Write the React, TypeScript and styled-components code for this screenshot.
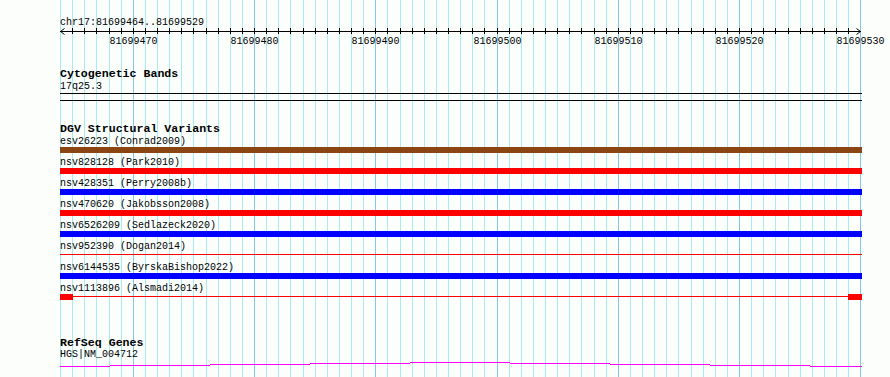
import React from "react";
import styled, { createGlobalStyle } from "styled-components";

const GlobalStyle = createGlobalStyle`
  html, body {
    margin: 0;
    padding: 0;
    background: #fcfefc;
  }
  body {
    font-family: "Liberation Mono", "DejaVu Sans Mono", monospace;
    color: #000;
  }
`;

const START = 81699464;
const END = 81699529;
const BASES = END - START + 1; // 66
const LEFT = 60;
const PX_PER_BASE = 12.125;
const TRACK_WIDTH = 802;

const gx = (k: number) => Math.round(LEFT + k * PX_PER_BASE) + 0.5;
const rx = (k: number) => Math.round(k * PX_PER_BASE) + 0.5;

const Page = styled.div`
  position: relative;
  width: 890px;
  height: 377px;
  overflow: hidden;
  background: #fcfefc;
`;

const Guides = styled.svg`
  position: absolute;
  left: 0;
  top: 0;
  display: block;
`;

const Content = styled.div`
  position: relative;
  padding-left: ${LEFT}px;
  width: ${TRACK_WIDTH}px;
`;

const PositionLabel = styled.div`
  padding-top: 17px;
  font-size: 10px;
  line-height: 11px;
  white-space: pre;
`;

const RulerSvg = styled.svg`
  display: block;
  overflow: visible;
  font-family: "Liberation Mono", "DejaVu Sans Mono", monospace;
  font-size: 10px;
`;

const Section = styled.section<{ $gap: number }>`
  display: flex;
  flex-direction: column;
  padding-top: ${(p) => p.$gap}px;
`;

const TrackTitle = styled.div<{ $after?: number }>`
  font-weight: 700;
  font-size: 11.6px;
  line-height: 11px;
  padding-bottom: ${(p) => p.$after ?? 0}px;
  white-space: pre;
`;

const ItemLabel = styled.div<{ $before?: number }>`
  font-size: 10px;
  line-height: 10px;
  height: 10px;
  margin-top: ${(p) => p.$before ?? 0}px;
  white-space: pre;
`;

const Band = styled.div`
  margin-top: 1px;
  height: 6px;
  border-top: 1px solid #000;
  border-bottom: 1px solid #000;
`;

const VariantRow = styled.div`
  display: flex;
  flex-direction: column;
  height: 21px;
`;

const BarLane = styled.div`
  display: flex;
  align-items: flex-start;
  height: 6px;
  width: ${TRACK_WIDTH}px;
`;

const Block = styled.div<{ $color: string; $width?: number }>`
  flex: ${(p) => (p.$width ? `0 0 ${p.$width}px` : "1 1 auto")};
  height: 6px;
  background: ${(p) => p.$color};
`;

const Thin = styled.div<{ $color: string }>`
  flex: 1 1 auto;
  height: 1px;
  margin-top: 2px;
  background: ${(p) => p.$color};
`;

const GeneSvg = styled.svg`
  display: block;
`;

type Variant = {
  name: string;
  study: string;
  color: string;
  kind: "full" | "thin" | "ends";
};

const variants: Variant[] = [
  { name: "esv26223", study: "Conrad2009", color: "#8b4513", kind: "full" },
  { name: "nsv828128", study: "Park2010", color: "#ff0000", kind: "full" },
  { name: "nsv428351", study: "Perry2008b", color: "#0000ff", kind: "full" },
  { name: "nsv470620", study: "Jakobsson2008", color: "#ff0000", kind: "full" },
  { name: "nsv6526209", study: "Sedlazeck2020", color: "#0000ff", kind: "full" },
  { name: "nsv952390", study: "Dogan2014", color: "#ff0000", kind: "thin" },
  { name: "nsv6144535", study: "ByrskaBishop2022", color: "#0000ff", kind: "full" },
  { name: "nsv1113896", study: "Alsmadi2014", color: "#ff0000", kind: "ends" },
];

const geneSegments: [number, number, number][] = [
  [60, 110, 366],
  [110, 210, 365],
  [210, 310, 364],
  [310, 410, 363],
  [410, 510, 362],
  [510, 610, 363],
  [610, 710, 364],
  [710, 810, 365],
  [810, 862, 366],
];

function GuideLines() {
  const lines = [];
  for (let k = 0; k <= BASES; k++) {
    const major = k % 10 === 6;
    lines.push(
      <line
        key={k}
        x1={gx(k)}
        x2={gx(k)}
        y1={0}
        y2={377}
        stroke={major ? "#80c8ec" : "#a8ecf0"}
        strokeWidth={1}
      />
    );
  }
  return (
    <Guides width={890} height={377} shapeRendering="crispEdges">
      {lines}
    </Guides>
  );
}

function Ruler() {
  const ticks = [];
  const labels = [];
  for (let k = 1; k < BASES; k++) {
    ticks.push(
      <line key={k} x1={rx(k)} x2={rx(k)} y1={0} y2={6} stroke="#000" strokeWidth={1} />
    );
  }
  for (let k = 6; k <= BASES; k += 10) {
    labels.push(
      <text key={k} x={rx(k)} y={15.5} textAnchor="middle" fill="#000">
        {START + k}
      </text>
    );
  }
  const endX = rx(BASES);
  return (
    <RulerSvg width={830} height={20}>
      <g shapeRendering="crispEdges">
        <line x1={0} x2={endX} y1={3.5} y2={3.5} stroke="#000" strokeWidth={1} />
        {ticks}
      </g>
      <polyline points="4.5,0.5 0.5,3.5 4.5,6.5" fill="none" stroke="#000" strokeWidth={1} />
      <polyline
        points={`${endX - 4},0.5 ${endX},3.5 ${endX - 4},6.5`}
        fill="none"
        stroke="#000"
        strokeWidth={1}
      />
      {labels}
    </RulerSvg>
  );
}

function VariantBar({ v }: { v: Variant }) {
  if (v.kind === "full") {
    return (
      <BarLane>
        <Block $color={v.color} />
      </BarLane>
    );
  }
  if (v.kind === "thin") {
    return (
      <BarLane>
        <Thin $color={v.color} />
      </BarLane>
    );
  }
  return (
    <BarLane>
      <Block $color={v.color} $width={13} />
      <Thin $color={v.color} />
      <Block $color={v.color} $width={14} />
    </BarLane>
  );
}

function GeneModel() {
  return (
    <GeneSvg width={TRACK_WIDTH} height={10} shapeRendering="crispEdges">
      {geneSegments.map(([x1, x2, y], i) => (
        <line
          key={i}
          x1={x1 - LEFT}
          x2={x2 - LEFT}
          y1={y - 360 + 0.5}
          y2={y - 360 + 0.5}
          stroke="#ff00ff"
          strokeWidth={1}
        />
      ))}
    </GeneSvg>
  );
}

export default function App() {
  return (
    <>
      <GlobalStyle />
      <Page>
        <GuideLines />
        <Content>
          <PositionLabel>{`chr17:${START}..${END}`}</PositionLabel>
          <Ruler />

          <Section $gap={20}>
            <TrackTitle>Cytogenetic Bands</TrackTitle>
            <ItemLabel $before={3}>17q25.3</ItemLabel>
            <Band />
          </Section>

          <Section $gap={22}>
            <TrackTitle $after={3}>DGV Structural Variants</TrackTitle>
            {variants.map((v) => (
              <VariantRow key={v.name}>
                <ItemLabel>{`${v.name} (${v.study})`}</ItemLabel>
                <VariantBar v={v} />
              </VariantRow>
            ))}
          </Section>

          <Section $gap={32}>
            <TrackTitle>RefSeq Genes</TrackTitle>
            <ItemLabel $before={2}>HGS|NM_004712</ItemLabel>
            <GeneModel />
          </Section>
        </Content>
      </Page>
    </>
  );
}
